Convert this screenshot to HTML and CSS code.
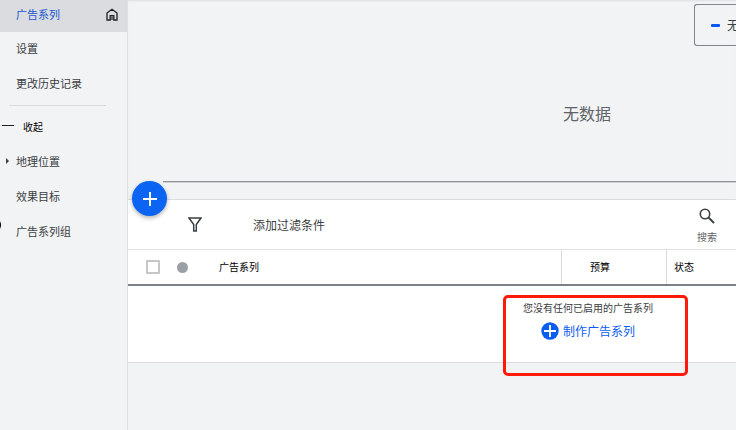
FILE: index.html
```html
<!DOCTYPE html>
<html lang="zh-CN">
<head>
<meta charset="utf-8">
<meta name="viewport" content="width=device-width, initial-scale=1">
<title>广告系列</title>
<link rel="stylesheet" href="styles.css">
</head>
<body>
<div class="app">
  <nav class="sidebar">
    <a class="nav-item nav-item--active" href="#campaigns">广告系列
      <svg class="home-icon" viewBox="0 0 12 13" aria-hidden="true"><path d="M1 5 6 1.2 11 5V12H7.800V7.600H4.200V12H1Z" fill="none" stroke="#202124" stroke-width="1.300"/><path d="M5.400 8.500h1.200V12H5.400z" fill="#202124"/></svg>
    </a>
    <a class="nav-item" href="#settings">设置</a>
    <a class="nav-item" href="#history">更改历史记录</a>
    <hr class="nav-divider">
    <button class="collapse" type="button"><span class="collapse-mark"></span>收起</button>
    <a class="nav-item nav-item--parent" href="#locations">地理位置</a>
    <a class="nav-item" href="#goals">效果目标</a>
    <a class="nav-item nav-item--edge" href="#groups">广告系列组</a>
  </nav>

  <main class="main">
    <section class="chart">
      <div class="legend"><span class="legend-mark"></span>无</div>
      <p class="chart-empty">无数据</p>
      <div class="axis"></div>
    </section>

    <section class="panel">
      <button class="fab" type="button" aria-label="新建">
        <svg viewBox="0 0 16 16" aria-hidden="true"><path d="M8 1v14M1 8h14" stroke="#fff" stroke-width="2"/></svg>
      </button>
      <div class="toolbar">
        <svg class="filter-icon" viewBox="0 0 14 15" aria-hidden="true"><path d="M1 1h12L8.300 7.500V14H5.700V7.500Z" fill="none" stroke="#3c4043" stroke-width="1.500"/></svg>
        <button class="add-filter" type="button">添加过滤条件</button>
        <button class="search" type="button">
          <svg viewBox="0 0 16 16" aria-hidden="true"><circle cx="6" cy="6" r="4.700" fill="none" stroke="#3c4043" stroke-width="1.600"/><path d="m9.500 9.500 5.500 5.500" stroke="#3c4043" stroke-width="1.900"/></svg>
          搜索
        </button>
      </div>
      <table class="grid">
        <thead>
          <tr>
            <th class="col-check"><input class="check" type="checkbox" aria-label="全选"></th>
            <th class="col-dot"><span class="dot"></span></th>
            <th class="col-name">广告系列</th>
            <th class="col-budget">预算</th>
            <th class="col-status">状态</th>
          </tr>
        </thead>
      </table>
      <div class="empty">
        <div class="empty-box">
          <p class="empty-text">您没有任何已启用的广告系列</p>
          <a class="create" href="#new">
            <svg viewBox="0 0 18 18" aria-hidden="true"><circle cx="9" cy="9" r="8.700" fill="#0b5cf0"/><path d="M9 3v12M3 9h12" stroke="#fff" stroke-width="1.800"/></svg>
            制作广告系列
          </a>
          <span class="highlight"></span>
        </div>
      </div>
    </section>
  </main>
</div>
</body>
</html>
```

FILE: styles.css
```css
* {
  box-sizing: border-box;
}

body {
  margin: 0;
  overflow: hidden;
  background: #f1f3f4;
  color: #3c4043;
  font-family: "Noto Sans CJK SC", sans-serif;
  font-size: 11px;
  line-height: 16px;
}

button {
  padding: 0;
  border: 0;
  background: none;
  color: inherit;
  font: inherit;
  cursor: pointer;
}

a {
  color: inherit;
  text-decoration: none;
}

p {
  margin: 0;
}

svg {
  display: block;
}

.app {
  display: grid;
  grid-template-columns: 128px minmax(0, 1fr);
  min-height: 100vh;
}

.sidebar {
  position: relative;
  border-right: 1px solid #dddfe2;
}

.nav-item {
  position: relative;
  display: flex;
  align-items: center;
  justify-content: space-between;
  height: 35px;
  padding: 0 9px 4px 16px;
}

.nav-item--active {
  height: 32px;
  background: #dadce0;
  color: #1a56d0;
}

.home-icon {
  width: 12px;
  height: 13px;
}

.nav-divider {
  height: 1px;
  margin: 3px 21px 3px 9px;
  border: 0;
  background: #d9dbde;
}

.collapse {
  display: flex;
  align-items: center;
  gap: 9px;
  height: 36px;
  color: #000;
  font-size: 10px;
}

.collapse-mark {
  width: 12px;
  height: 1px;
  margin: 0 0 4px 2px;
  background: #202124;
}

.nav-item--parent::before {
  position: absolute;
  left: 6px;
  border: 3px solid transparent;
  border-right: 0;
  border-left-color: #3c4043;
  content: "";
}

.nav-item--edge::before {
  position: absolute;
  top: 3px;
  left: -12px;
  width: 13px;
  height: 14px;
  border-radius: 50%;
  background: #000;
  content: "";
}

.chart {
  display: flex;
  flex-direction: column;
  height: 199px;
  padding-top: 4px;
  box-shadow: inset 0 2px 2px -1px #dddfe2;
}

.legend {
  display: flex;
  align-items: center;
  align-self: flex-end;
  gap: 7px;
  width: 42px;
  height: 42px;
  padding-left: 16px;
  overflow: hidden;
  border: 1px solid #80868b;
  border-right: 0;
  border-radius: 3px 0 0 3px;
  font-size: 12px;
  white-space: nowrap;
}

.legend-mark {
  flex: none;
  width: 9px;
  height: 3px;
  border-radius: 1px;
  background: #0b57f0;
}

.chart-empty {
  margin-top: 55px;
  padding-left: 51%;
  color: #5f6368;
  font-size: 16px;
  line-height: 24px;
  text-align: center;
}

.axis {
  height: 2px;
  margin: auto 0 16px 35px;
  border-top: 1px solid #909499;
  background: #d0d2d5;
}

.panel {
  position: relative;
  border-top: 1px solid #dadce0;
  border-bottom: 1px solid #dadce0;
  background: #fff;
}

.fab {
  position: absolute;
  top: -19px;
  left: 4px;
  display: grid;
  place-items: center;
  width: 35px;
  height: 35px;
  border-radius: 50%;
  background: #0b65f2;
  box-shadow: 0 2px 4px #0000004d;
}

.fab svg {
  width: 16px;
  height: 16px;
}

.toolbar {
  display: flex;
  align-items: center;
  height: 50px;
  padding: 0 19px 0 60px;
  border-bottom: 1px solid #dfe1e4;
}

.filter-icon {
  width: 14px;
  height: 15px;
}

.add-filter {
  margin-left: 51px;
  font-size: 12px;
}

.search {
  display: grid;
  justify-items: center;
  gap: 5px;
  margin-left: auto;
  padding-top: 4px;
  color: #5f6368;
  font-size: 10px;
}

.search svg {
  width: 16px;
  height: 16px;
}

.grid {
  width: 100%;
  border-bottom: 2px solid #7c8188;
  border-spacing: 0;
  table-layout: fixed;
}

.grid th {
  height: 34px;
  padding: 0;
  color: #000;
  font-size: 10px;
  font-weight: 400;
  text-align: left;
}

.grid .col-check {
  width: 49px;
  padding-left: 18px;
}

.grid .col-dot {
  width: 42px;
}

.grid .col-budget {
  width: 105px;
  padding-left: 28px;
  border-left: 1px solid #dadce0;
}

.grid .col-status {
  width: 70px;
  padding-left: 7px;
  border-left: 1px solid #dadce0;
}

.check {
  display: block;
  width: 14px;
  height: 14px;
  margin: 0;
  border: 2px solid #c4c6c9;
  border-radius: 1px;
  appearance: none;
}

.dot {
  display: block;
  width: 11px;
  height: 11px;
  border-radius: 50%;
  background: #9aa0a6;
}

.empty {
  display: grid;
  justify-items: center;
  height: 76px;
  padding: 9px 0 0 51%;
}

.empty-box {
  position: relative;
  display: grid;
  justify-items: center;
  align-content: start;
  gap: 6px;
  padding: 5px 0 0 2px;
}

.empty-text {
  font-size: 10px;
}

.create {
  display: flex;
  align-items: center;
  gap: 4px;
  height: 18px;
  color: #0b5cf0;
  font-size: 12px;
}

.create svg {
  width: 18px;
  height: 18px;
}

.highlight {
  position: absolute;
  top: 0;
  left: -18px;
  width: 185px;
  height: 81px;
  border: 3px solid #ff1a0a;
  border-radius: 5px;
  pointer-events: none;
}
```
